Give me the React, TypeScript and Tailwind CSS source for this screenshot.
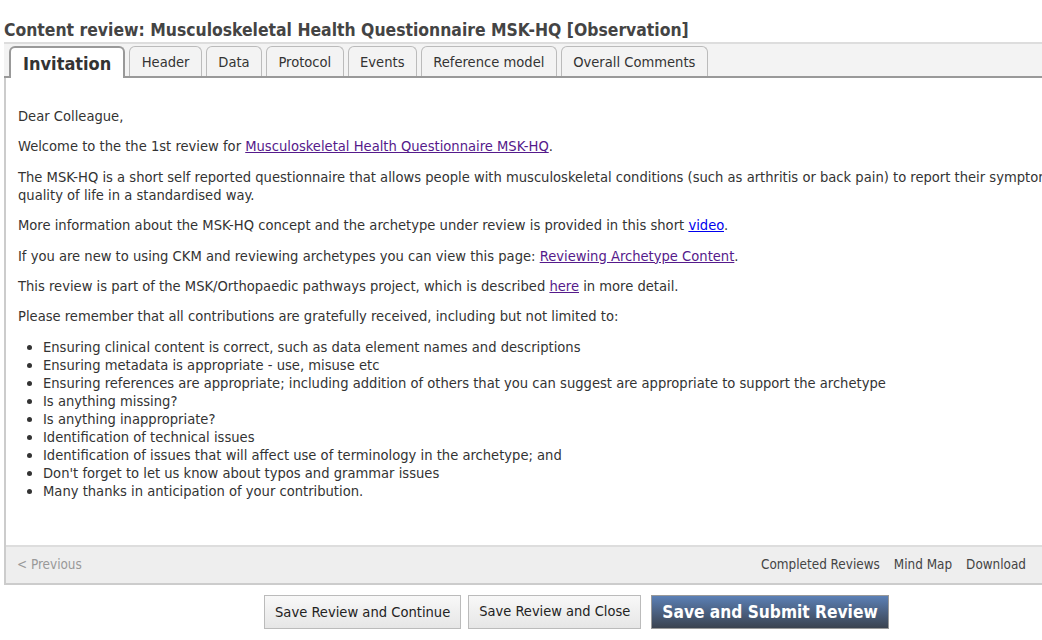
const tabs = ["Header", "Data", "Protocol", "Events", "Reference model", "Overall Comments"];

const bullets = [
  "Ensuring clinical content is correct, such as data element names and descriptions",
  "Ensuring metadata is appropriate - use, misuse etc",
  "Ensuring references are appropriate; including addition of others that you can suggest are appropriate to support the archetype",
  "Is anything missing?",
  "Is anything inappropriate?",
  "Identification of technical issues",
  "Identification of issues that will affect use of terminology in the archetype; and",
  "Don't forget to let us know about typos and grammar issues",
  "Many thanks in anticipation of your contribution.",
];

export default function App() {
  return (
    <div className="w-[1042px] h-[640px] overflow-hidden bg-white font-['DejaVu_Sans_Condensed','DejaVu_Sans',sans-serif] font-stretch-semi-condensed text-[#333]">
      <div className="w-[1124px] pl-[4px]">
        {/* title */}
        <h1 className="pt-[18px] h-[42px] text-[17.4px] leading-[24px] font-bold text-[#444]">
          Content review: Musculoskeletal Health Questionnaire MSK-HQ [Observation]
        </h1>

        {/* tabs */}
        <div className="flex items-end gap-[4px] pl-[5px] h-[36px] border-t-2 border-[#ddd] border-b-2 border-b-[#999] bg-[#f3f3f3]">
          <div className="h-[32px] -mb-[2px] px-[12px] flex items-center bg-white border-2 border-b-0 border-[#999] rounded-t-[6px] text-[18px] font-bold text-[#333]">
            Invitation
          </div>
          {tabs.map((t) => (
            <div
              key={t}
              className="h-[30px] px-[11.4px] flex items-center bg-[#f3f3f3] border border-b-0 border-[#bbb] rounded-t-[6px] text-[14.6px] text-[#333]"
            >
              {t}
            </div>
          ))}
        </div>

        {/* content */}
        <div className="border-l-2 border-[#ccc]">
          <div className="pl-[12px] pr-[20px] pt-[29px] h-[467px] text-[14.6px] leading-[18px]">
            <p>Dear Colleague,</p>
            <p className="mt-[12.4px]">
              Welcome to the the 1st review for{" "}
              <a className="underline text-[#551a8b]">Musculoskeletal Health Questionnaire MSK-HQ</a>.
            </p>
            <p className="mt-[12.4px] w-[1090px]">
              The MSK-HQ is a short self reported questionnaire that allows people with musculoskeletal conditions (such as arthritis or back pain) to report their symptoms and quality of life in a standardised way.
            </p>
            <p className="mt-[12.4px]">
              More information about the MSK-HQ concept and the archetype under review is provided in this short{" "}
              <a className="underline text-[#0000ee]">video</a>.
            </p>
            <p className="mt-[12.4px]">
              If you are new to using CKM and reviewing archetypes you can view this page:{" "}
              <a className="underline text-[#551a8b]">Reviewing Archetype Content</a>.
            </p>
            <p className="mt-[12.4px]">
              This review is part of the MSK/Orthopaedic pathways project, which is described{" "}
              <a className="underline text-[#551a8b]">here</a> in more detail.
            </p>
            <p className="mt-[12.4px]">
              Please remember that all contributions are gratefully received, including but not limited to:
            </p>
            <ul className="mt-[12.4px] pl-[25px] list-disc">
              {bullets.map((b) => (
                <li key={b}>{b}</li>
              ))}
            </ul>
          </div>

          {/* footer bar */}
          <div className="h-[40px] flex items-center bg-[#eee] border-t-2 border-[#ddd] border-b-2 border-b-[#ccc] pl-[11px] text-[13.4px]">
            <span className="text-[#999]">&lt; Previous</span>
            <div className="ml-auto mr-[98px] flex gap-[14px] text-[#444]">
              <span>Completed Reviews</span>
              <span>Mind Map</span>
              <span>Download</span>
            </div>
          </div>
        </div>
      </div>

      {/* actions */}
      <div className="flex gap-[7px] pl-[264px] pt-[10px]">
        <button className="h-[34px] px-[10px] bg-gradient-to-b from-[#f8f8f8] to-[#e6e6e6] border border-[#bbb] text-[14.6px] text-[#222]">
          Save Review and Continue
        </button>
        <button className="h-[34px] px-[10px] bg-gradient-to-b from-[#f8f8f8] to-[#e6e6e6] border border-[#bbb] text-[14.5px] text-[#222]">
          Save Review and Close
        </button>
        <button className="ml-[3px] h-[34px] px-[10px] pt-[2px] bg-gradient-to-b from-[#5b80b6] to-[#3b4350] border border-[#999] text-[17.2px] font-bold text-white">
          Save and Submit Review
        </button>
      </div>
    </div>
  );
}
